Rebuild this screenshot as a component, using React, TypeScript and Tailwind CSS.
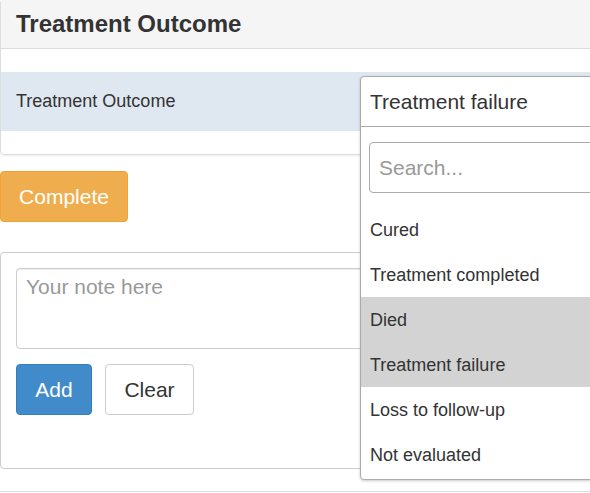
import { useState } from "react";

const OPTIONS = [
  "Cured",
  "Treatment completed",
  "Died",
  "Treatment failure",
  "Loss to follow-up",
  "Not evaluated",
];

export default function App() {
  const [note, setNote] = useState("");
  const highlighted = ["Died", "Treatment failure"];

  return (
    <div className="relative w-[590px] h-[493px] overflow-hidden bg-white text-[#333] font-['Liberation_Sans',Arial,sans-serif]">
      <div className="w-[660px]">
        {/* outcome panel */}
        <div className="-mt-px border border-[#ddd] rounded shadow-[0_1px_2px_rgba(0,0,0,0.08)]">
          <div className="h-[49px] bg-[#f5f5f5] border-b border-[#ddd] px-[15px] flex items-center">
            <h3 className="text-[24px] font-bold leading-none">Treatment Outcome</h3>
          </div>
          <div className="pt-[23px] pb-[23px]">
            <div className="h-[59px] bg-[#dfe8f1] px-[15px] flex items-center text-[18px]">
              Treatment Outcome
            </div>
          </div>
        </div>

        <button className="mt-4 h-[51px] w-[128px] rounded bg-[#f0ad4e] border border-[#eea236] text-white text-[21px]">
          Complete
        </button>

        {/* notes panel */}
        <div className="mt-[30px] h-[217px] border border-[#ccc] rounded p-[15px]">
          <textarea
            value={note}
            onChange={(e) => setNote(e.target.value)}
            placeholder="Your note here"
            className="block w-full h-[81px] resize-none border border-[#ccc] rounded px-[9px] py-[5px] text-[21px] leading-tight placeholder:text-[#999] shadow-[inset_0_1px_1px_rgba(0,0,0,0.075)] outline-none"
          />
          <div className="mt-[15px] flex gap-[13px]">
            <button className="h-[51px] w-[76px] rounded bg-[#428bca] border border-[#357ebd] text-white text-[21px]">
              Add
            </button>
            <button
              onClick={() => setNote("")}
              className="h-[51px] w-[89px] rounded bg-white border border-[#ccc] text-[21px]"
            >
              Clear
            </button>
          </div>
        </div>

        <div className="mt-[22px] border-t border-[#ddd]" />
      </div>

      {/* open select dropdown */}
      <div className="absolute left-[360px] top-[76px] w-[260px] h-[404px] bg-white border border-[#aaa] rounded shadow-[0_1px_3px_rgba(0,0,0,0.2)]">
        <div className="h-[50px] border-b border-[#aaa] px-[9px] flex items-center text-[21px]">
          Treatment failure
        </div>
        <div className="px-2 pt-[15px] pb-[14px]">
          <input
            placeholder="Search..."
            className="block w-full h-[51px] border border-[#aaa] rounded px-[9px] text-[21px] placeholder:text-[#999] outline-none"
          />
        </div>
        <ul>
          {OPTIONS.map((o) => (
            <li
              key={o}
              className={
                "h-[45px] px-[9px] pt-px flex items-center text-[18px] " +
                (highlighted.includes(o) ? "bg-[#d3d3d3]" : "")
              }
            >
              {o}
            </li>
          ))}
        </ul>
      </div>
    </div>
  );
}
